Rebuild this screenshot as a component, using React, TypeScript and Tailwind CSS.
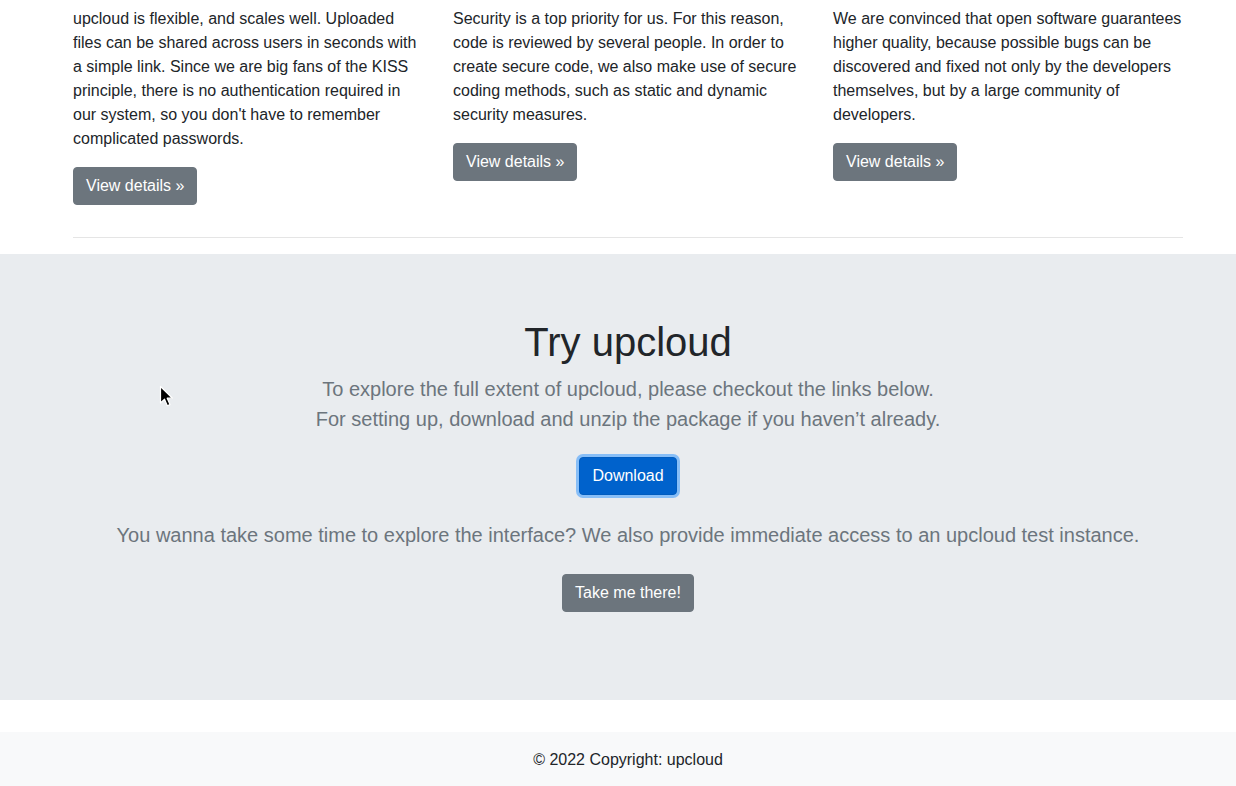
import React from "react";

function Cursor() {
  return (
    <svg
      className="absolute left-[159px] top-[385px]"
      width="16"
      height="24"
      viewBox="0 0 16 24"
    >
      <path
        d="M1.5 1.5 L1.5 18 L5.5 14.2 L8.3 20.8 L11 19.6 L8.2 13.2 L13.5 13.2 Z"
        fill="#000"
        stroke="#fff"
        strokeWidth="1.2"
        strokeLinejoin="round"
      />
    </svg>
  );
}

const btnGray =
  "inline-block bg-[#6c757d] border border-[#6c757d] text-white text-[16px] leading-[24px] px-3 py-[6px] rounded-[4px]";

export default function App() {
  const cols = [
    "upcloud is flexible, and scales well. Uploaded files can be shared across users in seconds with a simple link. Since we are big fans of the KISS principle, there is no authentication required in our system, so you don't have to remember complicated passwords.",
    "Security is a top priority for us. For this reason, code is reviewed by several people. In order to create secure code, we also make use of secure coding methods, such as static and dynamic security measures.",
    "We are convinced that open software guarantees higher quality, because possible bugs can be discovered and fixed not only by the developers themselves, but by a large community of developers.",
  ];
  return (
    <div
      className="relative w-full overflow-hidden bg-white text-[#212529]"
      style={{ fontFamily: '"Liberation Sans", Arial, sans-serif' }}
    >
      <div className="w-[1256px]">
        <div className="mx-auto w-[1140px] px-[15px] pt-[7px]">
          <div className="-mx-[15px] grid grid-cols-3 items-start">
            {cols.map((t, i) => (
              <div key={i} className="px-[15px]">
                <p className="text-[16px] leading-[24px] mb-4">{t}</p>
                <p className="mb-4">
                  <span className={btnGray}>View details »</span>
                </p>
              </div>
            ))}
          </div>
          <hr className="mt-4 mb-4 border-0 border-t border-[rgba(0,0,0,0.1)]" />
        </div>

        <section className="bg-[#e9ecef] h-[446px] pt-[64px] text-center">
          <div className="mx-auto w-[1140px] px-[15px]">
            <h1 className="text-[40px] leading-[48px] font-medium mb-2 text-[#212529]">
              Try upcloud
            </h1>
            <p className="text-[20px] leading-[30px] font-light text-[#6c757d]">
              To explore the full extent of upcloud, please checkout the links below.
              <br />
              For setting up, download and unzip the package if you haven’t already.
            </p>
            <div className="mt-[23px]">
              <span className="inline-block bg-[#0062cc] border border-[#005cbf] text-white text-[16px] leading-[24px] px-3 py-[6px] rounded-[4px] shadow-[0_0_0_3px_rgba(38,143,255,0.5)]">
                Download
              </span>
            </div>
            <p className="mt-[25px] text-[20px] leading-[30px] font-light text-[#6c757d]">
              You wanna take some time to explore the interface? We also provide immediate access to an upcloud test instance.
            </p>
            <div className="mt-[24px]">
              <span className={btnGray}>Take me there!</span>
            </div>
          </div>
        </section>

        <footer className="mt-[32px] bg-[#f8f9fa] py-4 text-center text-[16px] leading-[24px] text-[#212529] h-[60px]">
          © 2022 Copyright: upcloud
        </footer>
      </div>
      <Cursor />
    </div>
  );
}
